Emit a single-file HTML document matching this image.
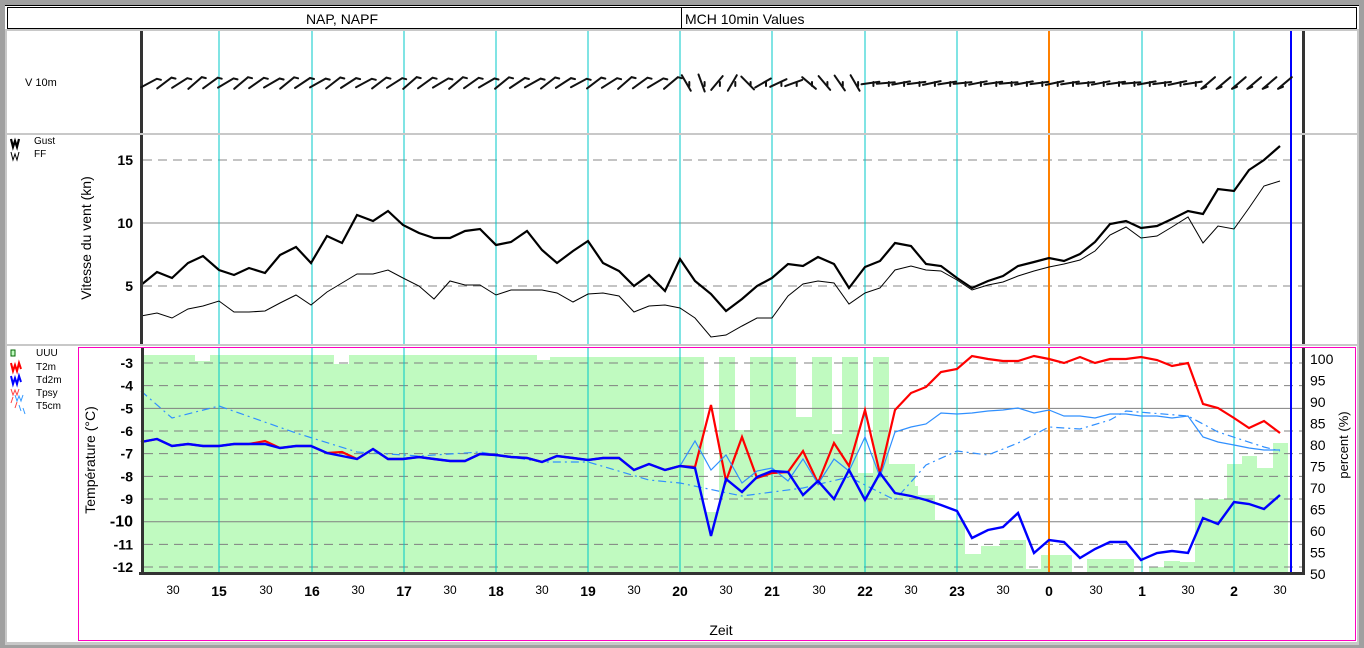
<!DOCTYPE html>
<html><head><meta charset="utf-8"><style>
html,body{margin:0;padding:0;background:#fff;width:1364px;height:648px;overflow:hidden}
svg{display:block}
text{font-family:"Liberation Sans",Arial,sans-serif}
</style></head><body>
<svg id="s" width="1364" height="648" xmlns="http://www.w3.org/2000/svg">
<rect width="1364" height="648" fill="#a0a0a0"/>
<rect x="5" y="5" width="1354" height="640" fill="#fff"/>
<rect x="7.5" y="7.5" width="1349" height="21" fill="#fff" stroke="#000" stroke-width="1"/>
<line x1="5" y1="5.5" x2="1359" y2="5.5" stroke="#000"/>
<line x1="681.5" y1="8" x2="681.5" y2="28" stroke="#000"/>
<text x="342" y="24" font-size="14" text-anchor="middle">NAP, NAPF</text>
<text x="685" y="24" font-size="14">MCH 10min Values</text>
<rect x="5" y="29" width="1354" height="2" fill="#c8c8c8"/>
<rect x="5" y="133" width="1354" height="2" fill="#c8c8c8"/>
<rect x="5" y="344" width="1354" height="2" fill="#c8c8c8"/>
<rect x="5" y="642" width="1354" height="3" fill="#c8c8c8"/>
<rect x="5" y="29" width="2" height="616" fill="#c8c8c8"/>
<rect x="1357" y="29" width="2" height="616" fill="#c8c8c8"/>
<rect x="78.5" y="347.5" width="1277" height="293" fill="none" stroke="#ff00c0" stroke-width="1"/>
<g id="bars" fill="#c0fac0"></g>
<g id="grid"></g>
<g id="lines"></g>
<rect x="140" y="31" width="3" height="102" fill="#333"/>
<rect x="140" y="135" width="3" height="209" fill="#333"/>
<rect x="141" y="348" width="3" height="227" fill="#333"/>
<rect x="1302" y="31" width="3" height="102" fill="#333"/>
<rect x="1302" y="135" width="3" height="209" fill="#333"/>
<rect x="1302" y="348" width="3" height="227" fill="#333"/>
<rect x="139" y="572" width="1166" height="3" fill="#333"/>
<line x1="1291" y1="31" x2="1291" y2="572" stroke="#0000ff" stroke-width="2"/>
<text x="25" y="86" font-size="11">V 10m</text>
<path d="M11 139 l2 8 l2-6 l2 6 l2-8" fill="none" stroke="#000" stroke-width="2.2"/>
<path d="M11 152 l2 8 l2-6 l2 6 l2-8" fill="none" stroke="#000" stroke-width="1"/>
<text x="34" y="144" font-size="10">Gust</text>
<text x="34" y="157" font-size="10">FF</text>
<g font-size="14" font-weight="bold" text-anchor="end">
<text x="133" y="165">15</text><text x="133" y="228">10</text><text x="133" y="291">5</text></g>
<text transform="translate(91,238) rotate(-90)" font-size="14" text-anchor="middle">Vitesse du vent (kn)</text>
<rect x="11" y="350" width="4" height="6" fill="#c0fac0" stroke="#060" stroke-width="1"/>
<text x="36" y="356" font-size="10">UUU</text>
<path d="M11 363 l2 8 l2-6 l2 6 l2-8 l2 6" fill="none" stroke="#f00" stroke-width="2"/>
<text x="36" y="370" font-size="10">T2m</text>
<path d="M11 376 l2 8 l2-6 l2 6 l2-8 l2 6" fill="none" stroke="#00f" stroke-width="2"/>
<text x="36" y="383" font-size="10">Td2m</text>
<path d="M11 389 l2 6 l2-5 l2 5 l2-6" fill="none" stroke="#f44" stroke-width="1"/><path d="M15 395 l2 6 l2-5 l2 5 l2-6" fill="none" stroke="#39f" stroke-width="1"/>
<text x="36" y="396" font-size="10">Tpsy</text>
<path d="M11 403 l2-6 M15 408 l2-6" stroke="#f44"/><path d="M19 405 l2 6 M23 408 l2 6" stroke="#39f"/>
<text x="36" y="409" font-size="10">T5cm</text>
<text transform="translate(95,460) rotate(-90)" font-size="14" text-anchor="middle">Température (°C)</text>
<text transform="translate(1348,445) rotate(-90)" font-size="13" text-anchor="middle">percent (%)</text>
<g id="tl" font-size="14" font-weight="bold" text-anchor="end"></g>
<g id="pl" font-size="14"></g>
<g id="xl"></g>
<text x="721" y="635" font-size="14" text-anchor="middle">Zeit</text>
<g id="barbs" stroke="#111" stroke-width="2" fill="none" stroke-linecap="round"></g>
</svg>
<script>
var NS="http://www.w3.org/2000/svg";
function el(p,t,a,txt){var e=document.createElementNS(NS,t);for(var k in a)e.setAttribute(k,a[k]);if(txt!=null)e.textContent=txt;document.getElementById(p).appendChild(e);return e;}
var bars=[[141,195,355],[195,210,361],[210,334,355],[334,349,364],[349,537,355],[537,550,360],[550,704,357],[704,719,512],[719,735,357],[735,750,430],[750,796,357],[796,812,417],[812,832,357],[832,842,434],[842,858,357],[858,873,473],[873,889,357],[889,915,464],[915,918,486],[918,935,495],[935,965,520],[965,981,554],[981,1000,546],[1000,1026,540],[1026,1041,569],[1041,1072,555],[1087,1134,559],[1149,1164,567],[1164,1180,561],[1180,1195,562],[1195,1227,499],[1227,1242,464],[1242,1257,456],[1257,1273,468],[1273,1288,443]];
bars.forEach(function(b){el("bars","rect",{x:b[0],y:b[2],width:b[1]-b[0],height:572-b[2]})});
[[160,1],[223,0],[286,1]].forEach(function(g){el("grid","line",{x1:143,x2:1302,y1:g[0],y2:g[0],stroke:"#888","stroke-dasharray":g[1]?"9,6":"none"})});
for(var k=0;k<10;k++){var y=363+k*22.67;el("grid","line",{x1:144,x2:1302,y1:y,y2:y,stroke:"#808080","stroke-dasharray":(k==2||k==7)?"none":"9,6"});}
var hx=[219,312,404,496,588,680,772,865,957,1049,1142,1234];
hx.forEach(function(x,i){var c=(i==9)?"#ff8000":"#00c8c8",w=(i==9)?2:1;[[31,133],[135,344],[348,572]].forEach(function(r){el("grid","line",{x1:x,x2:x,y1:r[0],y2:r[1],stroke:c,"stroke-width":w})})});
for(var k=0;k<10;k++){el("tl","text",{x:133,y:368+k*22.67,"font-size":k==7?16:14},String(-3-k));}
for(var k=0;k<11;k++){el("pl","text",{x:1310,y:364+k*21.5},String(100-5*k));}
var hl=["15","16","17","18","19","20","21","22","23","0","1","2"];
hx.forEach(function(x,i){el("xl","text",{x:x,y:596,"font-size":14,"font-weight":"bold","text-anchor":"middle"},hl[i]);el("xl","text",{x:x-46,y:594,"font-size":12,"text-anchor":"middle"},"30");});
el("xl","text",{x:1280,y:594,"font-size":12,"text-anchor":"middle"},"30");
var gust="141,285 157,272 172,278 188,263 203,256 219,270 234,275 249,268 265,273 280,255 296,247 311,263 327,236 342,243 357,215 373,221 388,211 403,225 419,233 434,238 450,238 465,231 480,229 496,245 511,242 527,231 542,250 557,263 573,251 588,241 603,263 619,271 634,286 649,275 665,291 680,259 695,281 711,294 726,311 742,299 757,286 772,278 788,264 803,266 818,257 834,264 849,288 865,267 880,261 895,243 911,246 926,264 941,266 957,278 972,288 988,281 1003,276 1018,266 1034,262 1049,258 1064,261 1080,254 1095,242 1110,224 1126,221 1141,228 1157,226 1172,219 1188,211 1203,214 1218,189 1234,191 1249,170 1264,160 1280,146";
var ff="141,316 157,313 172,318 188,309 203,306 219,301 234,312 249,312 265,311 280,303 296,295 311,305 327,292 342,283 357,274 373,274 388,270 403,278 419,286 434,299 450,281 465,285 480,285 496,295 511,290 527,290 542,290 557,293 573,302 588,294 603,293 619,296 634,312 649,306 665,305 680,308 695,318 711,337 726,335 742,326 757,318 772,318 788,296 803,284 818,281 834,283 849,304 865,293 880,288 895,270 911,266 926,270 941,271 957,280 972,290 988,285 1003,282 1018,276 1034,271 1049,267 1064,264 1080,260 1095,251 1110,235 1126,227 1141,238 1157,236 1172,227 1188,217 1203,243 1218,226 1234,229 1249,208 1264,186 1280,181";
var td="141,442 157,439 172,446 188,444 203,446 219,446 234,444 249,444 265,444 280,448 296,446 311,446 327,453 342,456 357,459 373,449 388,459 403,459 419,457 434,459 450,461 465,461 480,454 496,455 511,457 527,458 542,462 557,456 573,458 588,460 603,458 619,458 634,470 649,464 665,470 680,466 695,468 711,536 726,479 742,492 757,477 772,471 788,472 803,495 818,481 834,499 849,470 865,500 880,473 895,493 911,496 926,500 941,505 957,511 972,538 988,530 1003,527 1018,513 1034,553 1049,540 1064,542 1080,558 1095,549 1110,542 1126,542 1141,560 1157,553 1172,551 1188,553 1203,518 1218,524 1234,502 1249,504 1264,509 1280,495";
var tdpre=td.split(" ").slice(0,36).join(" ");
var t2=tdpre.replace("342,456","342,452").replace("265,444","265,441")+" 680,466 695,467 711,405 726,481 742,437 757,478 772,473 788,472 803,451 818,483 834,443 849,466 865,410 880,474 895,410 911,393 926,387 941,372 957,369 972,356 988,359 1003,361 1018,361 1034,356 1049,359 1064,363 1080,357 1095,363 1110,359 1126,359 1141,357 1157,360 1172,366 1188,363 1203,404 1218,408 1234,418 1249,428 1264,421 1280,433";
var tp=tdpre+" 680,466 695,441 711,470 726,455 742,483 757,471 772,468 788,481 803,459 818,484 834,459 849,471 865,437 880,477 895,432 911,427 926,424 941,413 957,414 972,413 988,411 1003,410 1018,408 1034,413 1049,410 1064,416 1080,416 1095,418 1110,414 1126,414 1141,416 1157,416 1172,418 1188,416 1203,437 1218,442 1234,445 1249,448 1264,450 1280,450";
var t5="141,391 172,418 219,406 296,433 357,452 419,456 480,452 542,462 588,462 649,480 680,483 742,496 803,488 849,477 895,500 926,465 957,451 988,455 1018,443 1049,427 1080,429 1110,420 1126,411 1188,416 1218,432 1264,447 1280,451";
el("lines","polyline",{points:ff,fill:"none",stroke:"#000","stroke-width":1});
el("lines","polyline",{points:gust,fill:"none",stroke:"#000","stroke-width":2.2});
el("lines","polyline",{points:t5,fill:"none",stroke:"#3090ff","stroke-width":1.2,"stroke-dasharray":"8,4,2,4"});
el("lines","polyline",{points:t2,fill:"none",stroke:"#ff0000","stroke-width":2.2});
el("lines","polyline",{points:tp,fill:"none",stroke:"#3090ff","stroke-width":1.2});
el("lines","polyline",{points:td,fill:"none",stroke:"#0000ff","stroke-width":2.4});
for(var i=0;i<75;i++){var x=149+i*15.35;var a,cy=83;
 if(x<680){a=-28-((i*37)%14);}else if(x<860){a=[-10,60,70,-50,-60,45,-30,-25,-20,40,50,55,60,80,-70,-50,-30][i%17];}else if(x<1200){a=-5-((i*13)%8);}else{a=-40;}
 var r=a*Math.PI/180,L=9,dx=Math.cos(r)*L,dy=Math.sin(r)*L;
 var x1=x-dx,y1=cy-dy,x2=x+dx,y2=cy+dy;
 var ex=(dx>=0?x1:x2),ey=(dx>=0?y1:y2),ox=(dx>=0?x2:x1),oy=(dx>=0?y2:y1);
 var tick=(x<680)?"l4 1":(x<1200?"M"+(x+3).toFixed(1)+" "+(cy-1)+"l0 4":"M"+ex.toFixed(1)+" "+ey.toFixed(1)+"l5 -2");
 el("barbs","path",{d:"M"+ex.toFixed(1)+" "+ey.toFixed(1)+"L"+ox.toFixed(1)+" "+oy.toFixed(1)+tick});}
</script>
</body></html>
